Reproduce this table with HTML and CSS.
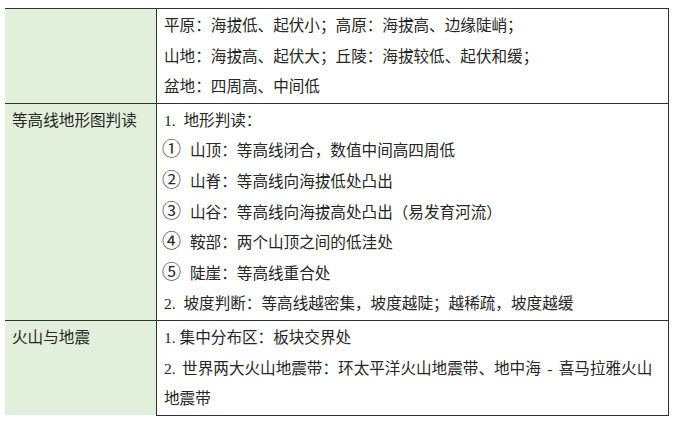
FILE: index.html
```html
<!DOCTYPE html>
<html lang="zh-CN">
<head>
<meta charset="utf-8">
<title>地形</title>
<link rel="stylesheet" href="styles.css">
</head>
<body>
<div class="page">
<table class="geo">
  <tr>
    <th class="label"></th>
    <td class="content">
      <div class="line">平原：海拔低、起伏小；高原：海拔高、边缘陡峭；</div>
      <div class="line">山地：海拔高、起伏大；丘陵：海拔较低、起伏和缓；</div>
      <div class="line">盆地：四周高、中间低</div>
    </td>
  </tr>
  <tr>
    <th class="label">等高线地形图判读</th>
    <td class="content">
      <div class="line">1.&nbsp; 地形判读：</div>
      <div class="line"><span class="num">①</span>山顶：等高线闭合，数值中间高四周低</div>
      <div class="line"><span class="num">②</span>山脊：等高线向海拔低处凸出</div>
      <div class="line"><span class="num">③</span>山谷：等高线向海拔高处凸出（易发育河流）</div>
      <div class="line"><span class="num">④</span>鞍部：两个山顶之间的低洼处</div>
      <div class="line"><span class="num">⑤</span>陡崖：等高线重合处</div>
      <div class="line">2.&nbsp; 坡度判断：等高线越密集，坡度越陡；越稀疏，坡度越缓</div>
    </td>
  </tr>
  <tr>
    <th class="label">火山与地震</th>
    <td class="content last">
      <div class="line">1. 集中分布区：板块交界处</div>
      <div class="line wide">2. 世界两大火山地震带：环太平洋火山地震带、地中海 - 喜马拉雅火山地震带</div>
    </td>
  </tr>
</table>
</div>
</body>
</html>
```
FILE: styles.css
```css
html, body {
  margin: 0;
  padding: 0;
  background: #ffffff;
}
.page {
  padding: 8px 0 0 5px;
}
.geo {
  border-collapse: collapse;
  width: 664px;
  table-layout: fixed;
  font-family: "Liberation Serif", "Noto Sans CJK SC", serif;
  font-size: 15.6px;
  line-height: 30.6px;
  color: #262626;
}
.geo tr {
  border-top: 1px solid #333333;
}
.label {
  width: 144px;
  background: #e2efda;
  font-weight: normal;
  text-align: left;
  vertical-align: top;
  padding: 2px 0 0 7px;
  border-right: 1px solid #333333;
}
.content {
  vertical-align: top;
  padding: 2px 6px 0 7px;
  border-right: 1px solid #333333;
}
.content.last {
  border-bottom: 1px solid #333333;
}
.line {
  height: 30.6px;
  white-space: nowrap;
}
.wide {
  word-spacing: 2.5px;
  white-space: normal;
  height: auto;
}
.num {
  font-family: "Noto Sans CJK SC", sans-serif;
  font-size: 19px;
  line-height: 0;
  margin-left: -2px;
  margin-right: 9px;
}
```
